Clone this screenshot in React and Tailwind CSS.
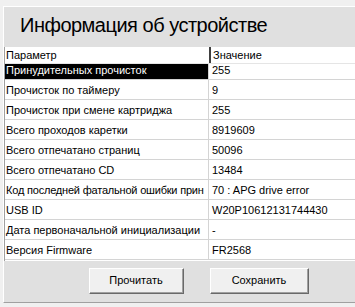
const ROWS = [
	[ 'Принудительных прочисток', '255' ],
	[ 'Прочисток по таймеру', '9' ],
	[ 'Прочисток при смене картриджа', '255' ],
	[ 'Всего проходов каретки', '8919609' ],
	[ 'Всего отпечатано страниц', '50096' ],
	[ 'Всего отпечатано CD', '13484' ],
	[ 'Код последней фатальной ошибки прин', '70 : APG drive error' ],
	[ 'USB ID', 'W20P10612131744430' ],
	[ 'Дата первоначальной инициализации', '-' ],
	[ 'Версия Firmware', 'FR2568' ]
];

function WinButton({ children, className }) {
	return (
		<div className={ `h-[26px] border border-t-white border-l-white border-r-[#696969] border-b-[#696969] bg-[#a0a0a0] ${ className }` }>
			<div className="h-full border-r border-b border-[#a0a0a0] bg-[#f0f0f0] flex items-center justify-center text-[11px] text-black">
				{ children }
			</div>
		</div>
	);
}

function InfoRow({ label, value, selected, first }) {
	// long labels are squeezed a bit so they stay inside the first column
	const tight = 34 < label.length;
	return (
		<div className={ `flex border-b border-[#d4d4d4] ${ first ? 'h-[16px]' : 'h-[20px]' }` }>
			<div
				className={ `w-[204px] shrink-0 overflow-hidden whitespace-nowrap pl-[1px] border-r border-[#d4d4d4] flex items-end pb-[2px] ${ tight ? 'tracking-[-0.2px]' : '' } ${ selected ? 'bg-black text-white' : 'text-black' }` }
			>
				{ label }
			</div>
			<div className="flex-1 overflow-hidden whitespace-nowrap pl-[3px] flex items-end pb-[2px]">
				{ value }
			</div>
		</div>
	);
}

export default function App() {
	return (
		<div
			className="w-[355px] h-[307px] bg-[#f0f0f0] overflow-hidden pl-[3px] pt-[6px]"
			style={{ fontFamily: '"Liberation Sans", Arial, sans-serif' }}
		>
			<div className="w-[352px] h-[297px] border-t border-l border-white border-b border-b-[#a0a0a0] bg-[#e0e0e0] flex flex-col">
				<div className="h-[40px] shrink-0 pl-[16px] pt-[7px] text-[20px] leading-[23px] tracking-[-0.5px] text-black">
					Информация об устройстве
				</div>
				<div className="h-[214px] shrink-0 bg-white border-l border-[#a0a0a0] text-[11px] leading-[13px] flex flex-col">
					<div className="h-[17px] flex border-b border-[#e5e5e5] text-black">
						<div className="w-[204px] shrink-0 pl-[1px] flex items-center">Параметр</div>
						<div className="w-[2px] shrink-0 bg-[#404040]"></div>
						<div className="flex-1 pl-[2px] flex items-center">Значение</div>
					</div>
					{ ROWS.map( ( [ label, value ], i ) => (
						<InfoRow
							key={ label }
							label={ label }
							value={ value }
							selected={ 0 === i }
							first={ 0 === i }
						/>
					) ) }
				</div>
				<div className="flex-1 flex items-start pt-[7px] pl-[85px] gap-[26px]">
					<WinButton className="w-[95px]">Прочитать</WinButton>
					<WinButton className="w-[99px]">Сохранить</WinButton>
				</div>
			</div>
		</div>
	);
}
